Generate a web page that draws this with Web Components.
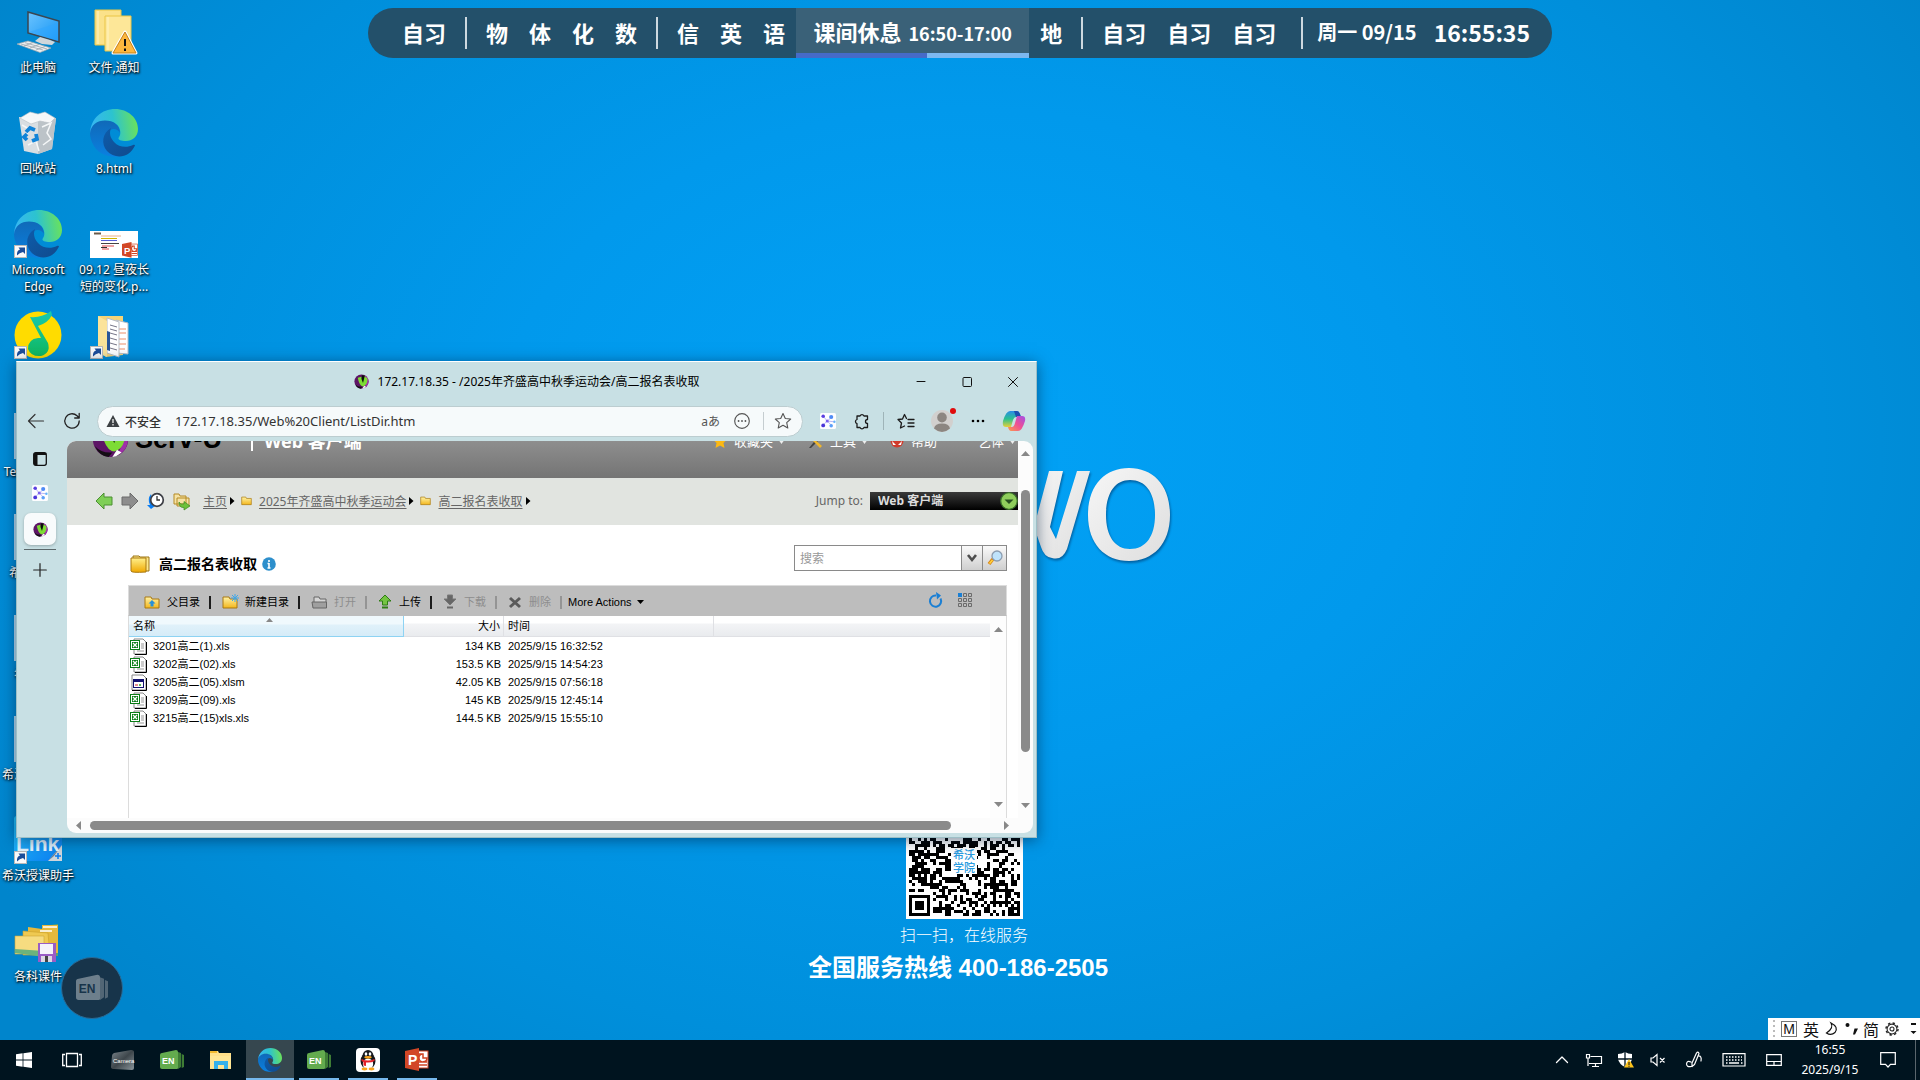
<!DOCTYPE html>
<html lang="zh-CN">
<head>
<meta charset="utf-8">
<title>桌面</title>
<style>
  html, body { margin: 0; height: 100%; overflow: hidden; }
  body {
    font-family: "Noto Sans", "Noto Sans CJK SC", sans-serif;
    font-size: 12px;
    --glass: #c8e0e4;
  }
</style>
</head>
<body>
<desktop-shell></desktop-shell>

<script>
/* ---------- shared helpers ---------- */
const RESET = `
  *, *::before, *::after { box-sizing: border-box; }
  button, input, select { font: inherit; color: inherit; margin: 0; padding: 0; border: 0; background: none; border-radius: 0; outline: 0; }
  button { display: inline-flex; align-items: center; justify-content: center; white-space: nowrap; }
  svg { display: block; }
`;
function define(name, css, html, setup) {
  const tpl = document.createElement('template');
  tpl.innerHTML = `<style>${RESET}${css}</style>${html}`;
  customElements.define(name, class extends HTMLElement {
    constructor() {
      super();
      this.attachShadow({ mode: 'open' }).append(tpl.content.cloneNode(true));
    }
    connectedCallback() { if (setup) setup.call(this, this.shadowRoot); }
  });
}

/* ---------- icon set: name -> [viewBox w, h, markup] ---------- */
const line = (d, c = '#1b1b1b', w = 1.3) => `<path d="${d}" fill="none" stroke="${c}" stroke-width="${w}" stroke-linecap="round" stroke-linejoin="round"/>`;
const EDGE = `
  <defs>
    <linearGradient id="et" x1="0" y1=".6" x2="1" y2=".5"><stop offset="0" stop-color="#38b6f5"/><stop offset=".5" stop-color="#2cc3cf"/><stop offset="1" stop-color="#6be25a"/></linearGradient>
    <linearGradient id="eb" x1="0" y1="0" x2="0" y2="1"><stop offset="0" stop-color="#1069b8"/><stop offset="1" stop-color="#0a80e0"/></linearGradient>
    <linearGradient id="ed" x1="0" y1="0" x2="1" y2="1"><stop offset="0" stop-color="#0d5cab"/><stop offset="1" stop-color="#114a8c"/></linearGradient>
  </defs>
  <path fill="url(#eb)" d="M0 24C0 15 8 11 15 11C24 11 30 17 30 24C27 19 20 18 18 25C13 34 18 47 31 47C22 49 10 47 4 37C1 32 0 28 0 24Z"/>
  <path fill="url(#et)" d="M0 24C1 9 12 0 25 0C38 0 48 9 48 20C48 28 42 32 36 32C31 32 28 31 28.500 29C29.500 27.500 30.500 26 30.300 23C30 16 24 11.500 15 11.500C7 11.500 1 16 0 24Z"/>
  <path fill="url(#ed)" d="M21 19C12 24 11 35 17 42C22 48 32 49 38 45C41 43 44 39 45 36.500C45 35.500 44 35.500 43 36C37 39 29 38.500 24 33C20 28.500 19 24 21 19Z"/>`;
const SERVU = `
  <circle cx="20" cy="20" r="19" fill="#5d1566"/>
  <path d="M26 2A19 19 0 0 1 37 28Q34 34 27 37Q38 20 26 2Z" fill="#a030a8"/>
  <path d="M10 10L20 7L22 18L26 4L36 12Q36 30 24 33Q14 32 10 10Z" fill="#7ddc34"/>
  <path d="M21 3L29 4L24 24L20 13Z" fill="#0c0c0c"/>
  <path d="M3 27Q10 35 22 34L18 39Q8 38 3 27Z" fill="#140d14"/>
  <path d="M22 39L27 31L32 34L26 38Z" fill="#fff"/>`;
const NET = `
  <rect width="20" height="20" rx="2" fill="#fdfdff"/>
  <path d="M4 4L9 10L15 5M9 10L4 15M9 10L15 16M9 10L18 11" stroke="#a9a4f4" fill="none"/>
  <circle cx="4" cy="4" r="2.200" fill="#5a3fe0"/><circle cx="9" cy="10" r="1.900" fill="#7a62ee"/>
  <circle cx="14" cy="5" r="2.600" fill="#4f8bf5"/><circle cx="4" cy="15.500" r="2.400" fill="#4a35d8"/>
  <circle cx="14" cy="16" r="2.200" fill="#5aa0f8"/><circle cx="18" cy="11" r="1.500" fill="#62b4fa"/>`;
const FOLDER = `
  <defs><linearGradient id="fg" x1="0" y1="0" x2="0" y2="1"><stop offset="0" stop-color="#fff3a6"/><stop offset="1" stop-color="#f3b61c"/></linearGradient></defs>
  <path d="M1 3H7L8 5H15V14H1Z" fill="url(#fg)" stroke="#a97912"/>`;
const SHORTCUT = `<rect x=".5" y="35.500" width="12" height="12" fill="#fbfbfb" stroke="#b9b9b9"/><path d="M3 45.500Q2.500 40.500 6 39.500L4.500 37.500H11V44L9 42Q5.500 42.500 3 45.500Z" fill="#1c4e9b"/>`;
const ENCARD = (c, d) => `
  <path d="M18 4L21 5V19L18 21ZM21.700 6L24 7V19L21.700 20Z" fill="${d}"/>
  <path d="M0 7Q0 5 2 5L16 2Q18 2 18 4V20Q18 21 17 21H2Q0 21 0 19Z" fill="${c}"/>`;
const P_ICON = `
  <rect x="12" y="3" width="11" height="17" fill="#fff" stroke="#d04423"/>
  <path d="M14 6H18V10H22A4 4 0 1 1 17 6M14 14H22M14 17H22" fill="none" stroke="#d04423" stroke-width="1.500"/>
  <path d="M0 3L14 0V23L0 20Z" fill="#d24726"/>
  <text x="3" y="17" font-family="Liberation Sans" font-weight="700" font-size="14" fill="#fff">P</text>`;
const XLS = `
  <path d="M4 1H13L16 4V16H4Z" fill="#fff" stroke="#888"/><path d="M5 16.500H16.500V4" fill="none" stroke="#000"/>
  <path d="M11 6H14M11 8H14M11 10H14M7 13H14" stroke="#999"/>
  <rect x=".5" y="2.500" width="9" height="9" fill="#fff" stroke="#0a7d16"/><rect x="2" y="4" width="6" height="6" fill="#0a7d16"/>
  <path d="M3 5L7 9M7 5L3 9" stroke="#fff" stroke-width="1.300"/>`;

const ICONS = {
  edge: [48, 48, EDGE],
  edgesm: [24, 24, `<g transform="scale(.5)">${EDGE}</g>`],
  edgelink: [48, 48, EDGE + SHORTCUT],
  servu: [40, 40, SERVU],
  net: [20, 20, NET],
  pc: [48, 48, `
    <defs><linearGradient id="scr" x1="0" y1="0" x2="1" y2="1"><stop offset="0" stop-color="#6cc4ff"/><stop offset="1" stop-color="#1294f4"/></linearGradient></defs>
    <path d="M14 4L45 13V34L14 25Z" fill="url(#scr)" stroke="#3b4650" stroke-width="1.500"/>
    <path d="M15 24L44 15V33Z" fill="#2ea6ff" opacity=".5"/>
    <path d="M26 29L36 32L41 34L38 37L28 36L21 33Z" fill="#cfd6da"/>
    <path d="M3 36L14 33L37 40L26 44.500Z" fill="#eceff1" stroke="#9ea7ad" stroke-width=".7"/>
    <path d="M7 36L29 42M11 34.700L33 41M10 38L19 34.500M16 40L25 36.500M22 42L31 38.500" stroke="#9ea7ad" stroke-width=".8"/>`],
  bin: [48, 48, `
    <path d="M5 8L42 9L38 40L24 45L10 42Z" fill="#d9dee2"/><path d="M24 12L42 9L38 40L24 45Z" fill="#bcc3c8"/>
    <path d="M6 9L16 3L24 5L31 3L41 9L36 14L26 12L17 15Z" fill="#f7f8f9" stroke="#b9c0c5" stroke-width=".6"/>
    <path d="M12 8L19 6L22 11M27 6L33 8L30 12M8 16L15 20L12 28M28 18L37 14L33 24L37 30L29 36M14 36L22 32L25 42" stroke="#f5f7f8" fill="none" stroke-width="1.500"/>
    <path d="M12 23L16 19L21 21M22 25L23 30L18 32M13 31L10 28L13 25" fill="none" stroke="#0f83d8" stroke-width="3.800"/>`],
  folderwarn: [48, 48, `
    <path d="M5 2H31V37H5Z" fill="#fbe28a" stroke="#eac646"/><path d="M15 8H41V43H15Z" fill="#fde798" stroke="#eac646"/>
    <path d="M8 3V36M18 9V42" stroke="#fff4c4"/>
    <path d="M35 24L46 45H23Z" fill="#fdb73e" stroke="#fff" stroke-width="3" stroke-linejoin="round"/><path d="M35 24L46 45H23Z" fill="#fdb73e" stroke="#c3821b" stroke-linejoin="round"/>
    <path d="M35 31V38M35 40.500V43" stroke="#111" stroke-width="2"/>`],
  slide: [48, 48, `
    <rect y="21" width="48" height="27" fill="#fff"/>
    <path d="M4 23.500H11" stroke="#6b5b4a" stroke-width="2"/><path d="M11 26H31" stroke="#eab08a"/><path d="M11 28.500H27" stroke="#d0b400"/>
    <path d="M11 30.500H27" stroke="#5560d8"/><path d="M11 33.500H29" stroke="#444"/><path d="M12 36H24M12 39H19" stroke="#d44"/><path d="M11 37.500H17" stroke="#333"/>
    <g transform="translate(32 32) scale(.68)">${P_ICON}</g>`],
  music: [48, 48, `
    <defs><linearGradient id="mg" x1="0" y1="0" x2="0" y2="1"><stop offset="0" stop-color="#16c9b0"/><stop offset="1" stop-color="#12b85f"/></linearGradient></defs>
    <circle cx="24" cy="24" r="23.500" fill="#ffdc00"/>
    <path d="M16 6Q28 7 37 0L38 4Q34 12 24 15L34 32Q37 42 27 45Q17 46 14 38Q14 28 24 27L27 27Z" fill="url(#mg)"/>` + SHORTCUT],
  docs: [48, 48, `
    <path d="M8 5H33V44L16 46L8 40Z" fill="#f6d477"/>
    <path d="M26 9L38 12V43L26 42Z" fill="#fff" stroke="#b8bec6"/><path d="M28 18H36M28 22H36M29 28H36M29 33H36M29 38H35" stroke="#eb8f6b"/>
    <path d="M17 7L29 11V46L17 42Z" fill="#fff" stroke="#b8bec6"/><path d="M20 14L27 16M20 18L27 20M20 22L27 24M20 27L27 29M20 32L27 34M20 37L27 39" stroke="#778"/>
    <path d="M17 20L20 21V40L17 39Z" fill="#2a5699"/><path d="M8 5L17 10V46L8 42Z" fill="#fbe39a"/>` + SHORTCUT],
  sliver: [48, 48, `<rect x="0" y="1" width="46" height="46" fill="#b8dcf0"/>`],
  link: [48, 48, `
    <defs><linearGradient id="lk" x1="0" y1="0" x2="1" y2="1"><stop offset="0" stop-color="#25c4fa"/><stop offset="1" stop-color="#0a7cf0"/></linearGradient></defs>
    <rect width="48" height="45" rx="3" fill="url(#lk)"/><path d="M48 29L34 45H48Z" fill="#cfd6dc"/><path d="M48 29L40 40L34 45Q40 38 48 29Z" fill="#6d7f90"/><path d="M41 40H47M44 37V43" stroke="#0a7cf0" stroke-width="1.500"/>
    <text x="2" y="35" font-family="Liberation Sans" font-weight="700" font-size="21" fill="#e4f5ff">Link</text>` + SHORTCUT],
  folders: [48, 48, `
    <path d="M30 9L44 7V39H40ZM20 13H40V38H20Z" fill="#5da36b"/>
    <path d="M14 10L28 12V8L44 8V36H14Z" fill="#e5b93c"/><path d="M9 14L34 16L36 38H9Z" fill="#efc951" stroke="#caa02a" stroke-width=".6"/><path d="M29 10H43M26 14H38" stroke="#fff" stroke-width="1.500"/>
    <path d="M1 19H30V37H1Z" fill="#f6dc80" stroke="#cca638" stroke-width=".6"/><path d="M1 32L30 34V40L1 36Z" fill="#6db37c"/>
    <rect x="24" y="26" width="18" height="19" fill="#9a5cc6"/><rect x="26" y="27" width="13" height="10" fill="#f5f2fa"/><rect x="27" y="39" width="11" height="6" fill="#dcd8e4"/><rect x="31" y="39" width="3" height="6" fill="#444"/>`],
  win: [16, 16, `<path d="M0 2.200L6.600 1.300V7.600H0ZM7.400 1.200L16 0V7.600H7.400ZM0 8.400H6.600V14.700L0 13.800ZM7.400 8.400H16V16L7.400 14.800Z" fill="#fff"/>`],
  taskview: [20, 16, `<path d="M4.500 1.500H15.500V14.500H4.500ZM3 2.500H.7V13.500H3M17 2.500H19.300V13.500H17" fill="none" stroke="#fff" stroke-width="1.300"/>`],
  camera: [24, 24, `
    <defs><linearGradient id="cg" x1="0" y1="0" x2="1" y2="1"><stop offset="0" stop-color="#7c868c"/><stop offset=".5" stop-color="#3d464b"/><stop offset="1" stop-color="#8b959b"/></linearGradient></defs>
    <path d="M1 8Q1 6 3 5L20 2Q23 2 23 4V20Q23 22 21 22L3 21Q0 21 0 19Z" fill="url(#cg)"/>
    <text x="2" y="15" font-family="Liberation Sans" font-size="6" fill="#fff">Camera</text>`],
  encard: [24, 24, ENCARD('#63ab4e', '#3e7d35') + `<text x="2" y="16" font-family="Liberation Sans" font-weight="700" font-size="9" fill="#fff">EN</text>`],
  encardgrey: [24, 24, ENCARD('#6d7f8c', '#526675') + `<text x="2" y="16" font-family="Liberation Sans" font-weight="700" font-size="9" fill="#17344a">EN</text>`],
  explorer: [24, 24, `<path d="M1 3H9L10 5H22V21H1Z" fill="#ffe08a"/><path d="M1 3H8V5H1Z" fill="#f2b92f"/><path d="M1 8H22V20H1Z" fill="#ffe695"/><path d="M5 21V13H19V21H15V17H9V21Z" fill="#35b1ea"/>`],
  qq: [24, 24, `<rect width="24" height="24" rx="4" fill="#fff"/>
    <ellipse cx="12" cy="13" rx="7.500" ry="8" fill="#15181c"/><ellipse cx="12" cy="8" rx="5.500" ry="6" fill="#15181c"/><ellipse cx="12" cy="16" rx="5.200" ry="5.500" fill="#fff"/>
    <ellipse cx="10" cy="6" rx="1.300" ry="1.700" fill="#fff"/><ellipse cx="14" cy="6" rx="1.300" ry="1.700" fill="#fff"/><ellipse cx="12" cy="9.300" rx="3.700" ry="1.200" fill="#fba51c"/>
    <path d="M5.500 11Q12 14 18.500 11V13Q15 15 10 14.500V18L7.500 17.500V14L5.500 13Z" fill="#e32028"/><ellipse cx="8.500" cy="21" rx="3" ry="1.400" fill="#fba51c"/><ellipse cx="15.500" cy="21" rx="3" ry="1.400" fill="#fba51c"/>`],
  ppt: [24, 24, P_ICON],
  /* tray */
  chevup: [16, 16, line('M2.500 10.500L8 5L13.500 10.500', '#fff', 1.300)],
  netmon: [18, 16, `<path d="M5.500 4.500H16.500V11.500H4M10.500 12V14.500M7 14.500H14M1.500 2.500H4.500V6H1.500ZM3 6V14" fill="none" stroke="#fff" stroke-width="1.200"/>`],
  shield: [18, 16, `<path d="M8 0Q11 2 15 2V7Q14 12 8 15Q2 12 1 7V2Q5 2 8 0Z" fill="#fff"/><path d="M8 0V15M1 7H15" stroke="#00141f" stroke-width="1.300"/><path d="M12 7L17 15.500H7Z" fill="#fcc21b"/><path d="M12 10V13M12 13.700V14.800" stroke="#111"/>`],
  mute: [18, 16, `<path d="M2 6H4L8 2.500V13.500L4 10H2ZM11 6L15.500 10.500M15.500 6L11 10.500" fill="none" stroke="#fff" stroke-width="1.200"/>`],
  pen: [18, 18, line('M11.500 2Q13 0 14 2.500L9.500 13.500L7 15.500L7 12ZM6 11Q2 9 1.500 13Q2 16.500 6 15.500M13 5Q17 4.500 16 10', '#fff', 1.200)],
  kbd: [24, 14, `<path d="M1 .7H23V13H1Z" fill="none" stroke="#fff" stroke-width="1.200"/><path d="M4 4H20M4 7H20" stroke="#fff" stroke-width="1.300" stroke-dasharray="1.500 1.500"/><path d="M4 10H5.500M7 10H17M19 10H20.500" stroke="#fff" stroke-width="1.300"/>`],
  pad: [16, 12, `<path d="M.7 .7H15.300V11.300H.7ZM.7 7.500H15.300M8 7.500V11" fill="none" stroke="#fff" stroke-width="1.200"/>`],
  notif: [16, 16, `<path d="M.7 .7H15.300V12.300H10.500L8 15L5.500 12.300H.7Z" fill="none" stroke="#fff" stroke-width="1.200"/>`],
  moon: [14, 14, `<path d="M6 1Q9 6 1.500 11Q6 14 10 10.500Q14 5 6 1Z" fill="none" stroke="#111" stroke-width="1.200"/>`],
  punct: [14, 14, `<circle cx="2.500" cy="3" r="2" fill="#111"/><path d="M9.500 6.500H13L10 12.500H8Z" fill="#111"/>`],
  gear: [16, 16, `<circle cx="8" cy="8" r="5.600" fill="none" stroke="#222" stroke-width="1.200"/><circle cx="8" cy="8" r="6.900" fill="none" stroke="#222" stroke-width="1.600" stroke-dasharray="2.700 2.700"/><circle cx="8" cy="8" r="2.300" fill="none" stroke="#222" stroke-width="1.200"/>`],
  imemenu: [8, 12, `<path d="M2 1H7" stroke="#111" stroke-width="2"/><path d="M1.500 8H7.500L4.500 11Z" fill="#111"/>`],
  /* browser chrome */
  min: [10, 10, line('M1 4.500H9', '#111', 1)],
  max: [10, 10, `<rect x="1" y=".5" width="8.500" height="9" rx="1" fill="none" stroke="#111"/>`],
  close: [10, 10, line('M.5 .5L9.500 9.500M9.500 .5L.5 9.500', '#111', 1)],
  back: [18, 16, line('M16.500 8H1.500M8 1.500L1.500 8L8 14.500', '#333', 1.200)],
  reload: [18, 18, line('M16.200 9A7.200 7.200 0 1 1 14 3.800L16 5.800M16.200 1.500V6H11.700', '#222', 1.300)],
  warn: [14, 12, `<path d="M7 0L13.500 12H.5Z" fill="#3c4043"/><path d="M7 4V8M7 9V10.500" stroke="#fff" stroke-width="1.200"/>`],
  dots3: [14, 14, `<circle cx="7" cy="7" r="6.400" fill="none" stroke="#555"/><circle cx="4" cy="7" r=".8" fill="#555"/><circle cx="7" cy="7" r=".8" fill="#555"/><circle cx="10" cy="7" r=".8" fill="#555"/>`],
  star: [18, 18, line('M9 1.500L11.300 6.500L16.700 7L12.700 10.700L13.800 16L9 13.300L4.200 16L5.300 10.700L1.300 7L6.700 6.500Z', '#555', 1.100)],
  puzzle: [18, 18, line('M4 4H7A2.200 2.200 0 0 1 11 4H14.500V7.500A2 2 0 0 0 14.500 11.500V15.500H11A2.200 2.200 0 0 1 7 15.500H4V11.700A2.200 2.200 0 0 1 4 7.500Z', '#1b1b1b', 1.300)],
  favs: [18, 18, line('M7.500 14L3.500 16L4.500 11L1 7.500L5.500 7L7.500 2.500L9.500 6.500M11 7.500H17M11 11H17M11 14.500H17', '#1b1b1b', 1.300)],
  avatar: [22, 22, `<circle cx="11" cy="11" r="11" fill="#d2d0ce"/><ellipse cx="11" cy="7.500" rx="4.800" ry="5" fill="#8c8681"/><path d="M3 18.500Q4 13.500 11 13.500Q18 13.500 19 18.500Q15 22 11 22Q7 22 3 18.500Z" fill="#8c8681"/>`],
  more: [14, 4, `<circle cx="2" cy="2" r="1.300"/><circle cx="7" cy="2" r="1.300"/><circle cx="12" cy="2" r="1.300"/>`],
  copilot: [24, 22, `
    <defs><linearGradient id="c1" x1="0" y1="0" x2="0" y2="1"><stop offset="0" stop-color="#2a8de8"/><stop offset=".5" stop-color="#2cc18e"/><stop offset="1" stop-color="#e8cf3a"/></linearGradient>
    <linearGradient id="c2" x1="1" y1="0" x2="0" y2="1"><stop offset="0" stop-color="#a04fe8"/><stop offset=".5" stop-color="#ef4f94"/><stop offset="1" stop-color="#fb9c4a"/></linearGradient></defs>
    <path d="M8 1H15Q17 1 18 4L19 7H14Q12 7 11 10L9 17H4Q0 17 1 11Q4 1 8 1Z" fill="url(#c1)"/><path d="M12 1H15Q17 1 18 4L19 7H14Z" fill="#1b4fb0"/>
    <path d="M16 21H9Q7 21 6 17H10Q12 17 13 13L15 6H20Q24 6 23 11Q20 21 16 21Z" fill="url(#c2)"/>`],
  tabs: [14, 14, `<rect x=".7" y=".7" width="12.600" height="12.600" rx="2" fill="none" stroke="#111" stroke-width="1.300"/><path d="M1 1H4.500V13H1ZM1 1H13V3H1Z" fill="#111"/>`],
  plus: [14, 14, line('M7 .7V13.300M.7 7H13.300', '#222', 1.200)],
  /* serv-u page */
  goldstar: [14, 14, `<path d="M7 0L9 5L14 5.500L10.500 9L11.500 14L7 11.500L2.500 14L3.500 9L0 5.500L5 5Z" fill="#fdb913"/>`],
  tools: [16, 16, `<path d="M2 15L11 4L13 6L4 15Z" fill="#444"/><path d="M6 5L15 13L13 15L5 7Z" fill="#f0b62c"/><path d="M9 1H15L13 5H9Z" fill="#555"/>`],
  helpball: [14, 14, `<circle cx="7" cy="7" r="6.500" fill="#d03a2b"/><path d="M2 7L6 11H3ZM12 7L8 11H11Z" fill="#fff"/>`],
  navback: [18, 18, `<path d="M1 9L9 1V5H17V13H9V17Z" fill="#7fcf57" stroke="#4c8f33"/>`],
  navfwd: [18, 18, `<path d="M17 9L9 1V5H1V13H9V17Z" fill="#8d8d8d" stroke="#6b6b6b"/>`],
  history: [18, 18, `<path d="M4 2Q0 7 3 13L0 13L4 17L8 14L6 11Z" fill="#0a7df2"/><circle cx="10" cy="8" r="6.300" fill="#fff" stroke="#3d3f46" stroke-width="1.700"/><path d="M10 4V8H13" fill="none" stroke="#333" stroke-width="1.300"/>`],
  foldergo: [18, 18, `<path d="M1 2H6L7 4H13V12H1ZM4 6H16V14H4Z" fill="#f5e2a4" stroke="#b58a25"/><path d="M6 10Q7 13 11 12V9.500L17 14L11 18V15.500Q6 16 6 10Z" fill="#6cc13a" stroke="#3b8a1d" stroke-width=".7"/>`],
  folder: [16, 16, FOLDER],
  bigfolder: [20, 20, `<defs><linearGradient id="bf" x1="0" y1="0" x2="0" y2="1"><stop offset="0" stop-color="#fff08c"/><stop offset="1" stop-color="#f0a800"/></linearGradient></defs><path d="M3 4V2H9L10 3H19V17H16" fill="#ffe88a" stroke="#9b7414"/><path d="M1 4H16V18Q1 19 1 17Z" fill="url(#bf)" stroke="#a97912"/>`],
  info: [14, 14, `<circle cx="7" cy="7" r="6.800" fill="#2d8fcc"/><path d="M7 3V5M7 6V11M5.500 6.500H7M5.500 11H8.500" stroke="#fff" stroke-width="1.600"/>`],
  folderup: [16, 16, FOLDER + `<path d="M8 6L11.500 9.500H9.500V12.500H6.500V9.500H4.500Z" fill="#2590d8"/>`],
  foldernew: [16, 16, FOLDER + `<path d="M13 0V8M9 4H17M10 1L16 7M16 1L10 7" stroke="#3fa6e8"/>`],
  folderopen: [16, 16, `<path d="M3 8V3H8L9 5H15V8" fill="#d5d5d5" stroke="#666"/><path d="M1 8H15.500V14H2Z" fill="#9f9f9f" stroke="#666"/>`],
  up: [14, 16, `<path d="M7 1L13 7H9.500V11H4.500V7H1Z" fill="#74c442" stroke="#2f7d14"/><path d="M4 13.500H10" stroke="#2f7d14" stroke-width="2"/>`],
  down: [14, 16, `<path d="M7 11L13 5H9.500V1H4.500V5H1Z" fill="#666" stroke="#777"/><path d="M4 13.500H10" stroke="#666" stroke-width="2"/>`],
  cross: [14, 13, `<path d="M2 2L12 11M12 2L2 11" stroke="#5a5a5a" stroke-width="3"/>`],
  refresh: [14, 16, `<path d="M11.500 6.500A5.600 5.600 0 1 1 7 3.500" fill="none" stroke="#1a7fd4" stroke-width="2"/><path d="M7 0L12 3.500L8 7.500Z" fill="#1a7fd4"/>`],
  grid: [15, 15, `<rect width="4" height="4" fill="#1a7fd4"/><path d="M5.500 .5H8.500V3.500H5.500ZM10.500 .5H13.500V3.500H10.500ZM.5 5.500H3.500V8.500H.5ZM5.500 5.500H8.500V8.500H5.500ZM10.500 5.500H13.500V8.500H10.500ZM.5 10.500H3.500V13.500H.5ZM5.500 10.500H8.500V13.500H5.500ZM10.500 10.500H13.500V13.500H10.500Z" fill="none" stroke="#6b6b6b"/>`],
  vee: [10, 8, `<path d="M1 1L5 6L9 1" fill="none" stroke="#4e4e4e" stroke-width="2.600"/>`],
  glass: [16, 16, `<path d="M6 9L2 14" stroke="#d98512" stroke-width="3.500"/><path d="M5.500 10L2.500 13.500" stroke="#ffd23c" stroke-width="1.600"/><circle cx="10" cy="6" r="5" fill="#bfe3fb" stroke="#8c9db0" stroke-width="1.300"/>`],
  jump: [18, 18, `<circle cx="9" cy="9" r="8.300" fill="#8fce5c" stroke="#39702a" stroke-width="1.300"/><path d="M4.500 7.500H13.500L9 12Z" fill="#275020"/>`],
  xls: [17, 17, XLS],
  xlsm: [17, 17, `<path d="M2 1H13L16 4V16H2Z" fill="#fff" stroke="#888"/><path d="M2 16.500H16.500V4" fill="none" stroke="#000"/><rect x="3.500" y="5.500" width="10" height="8" fill="#fff" stroke="#12126e"/><path d="M3 6.500H14" stroke="#12126e" stroke-width="3"/><path d="M6 10V12M7.500 10.500V11.500" stroke="#c22"/><path d="M10 10V12" stroke="#2a2" stroke-width="1.500"/>`],
  triU: [9, 5, `<path d="M0 5L4.500 0L9 5Z" fill="#888"/>`],
  triD: [9, 5, `<path d="M0 0L4.500 5L9 0Z" fill="#888"/>`],
  triDk: [7, 4, `<path d="M0 0L3.500 4L7 0Z" fill="#000"/>`],
  triW: [7, 5, `<path d="M0 0L3.500 5L7 0Z" fill="#eee"/>`],
  triL: [5, 9, `<path d="M5 0L0 4.500L5 9Z" fill="#888"/>`],
  triR: [5, 9, `<path d="M0 0L5 4.500L0 9Z" fill="#888"/>`],
  triK: [5, 8, `<path d="M0 0L4.500 4L0 8Z" fill="#000"/>`],
};
customElements.define('ui-icon', class extends HTMLElement {
  static observedAttributes = ['name', 'size'];
  constructor() {
    super();
    this.attachShadow({ mode: 'open' }).innerHTML =
      '<style>:host { display: inline-block; flex: none; line-height: 0; } svg { display: block; overflow: visible; }</style><span></span>';
  }
  attributeChangedCallback() {
    const icon = ICONS[this.getAttribute('name')];
    if (!icon) return;
    const [w, h, body] = icon;
    const width = Number(this.getAttribute('size')) || w;
    this.shadowRoot.querySelector('span').innerHTML =
      `<svg width="${width}" height="${Math.round(width * h / w)}" viewBox="0 0 ${w} ${h}" aria-hidden="true">${body}</svg>`;
  }
});

/* ---------- desktop icons ---------- */
define('desktop-icon', `
  :host { display: flex; flex-direction: column; align-items: center; width: 76px; height: 101px; color: #fff; }
  span { display: block; margin-top: 3px; width: 76px; font-size: 12px; line-height: 17px; text-align: center;
         text-shadow: 1px 1px 2px #000, 0 1px 3px rgba(0,0,0,.8); }
`, `<ui-icon size="48"></ui-icon><span><slot></slot></span>`, function (root) {
  root.querySelector('ui-icon').setAttribute('name', this.getAttribute('icon'));
});

/* ---------- timetable strip ---------- */
define('lesson-item', `
  :host { display: flex; align-items: center; padding: 0 10px 3px; font-size: 22px; }
`, `<slot></slot>`);
define('lesson-now', `
  :host { display: grid; grid-template-rows: 45px 5px; width: 233px; align-self: stretch; background: #3a6178; }
  div { display: flex; align-items: baseline; justify-content: center; gap: 7px; font-size: 22px; line-height: 46px; }
  small { font-size: 18px; }
  progress { appearance: none; width: 100%; height: 5px; border: 0; display: block; background: #7db8f0; }
  progress::-webkit-progress-bar { background: #7db8f0; }
  progress::-webkit-progress-value { background: #466bc8; }
`, `<div><slot></slot><small><slot name="range"></slot></small></div><progress max="100" value="56" aria-label="课间进度"></progress>`);
define('lesson-bar', `
  :host { display: flex; align-items: center; gap: 1px; width: 1184px; height: 50px; padding: 0 22px 0 24px; overflow: hidden;
    border-radius: 25px; background: #23506a; color: #fff; font-family: "Noto Sans CJK SC", sans-serif; font-weight: 700; white-space: nowrap; line-height: 40px; }
  i { width: 2px; height: 32px; margin: 0 8px; background: #cdd9e0; }
  i.last { margin-left: 14px; }
  .date { padding: 0 0 3px 5px; font-size: 20px; }
  .time { padding-bottom: 3px; margin-left: auto; font-size: 23px; }
`, `
  <lesson-item>自习</lesson-item><i></i>
  <lesson-item>物</lesson-item><lesson-item>体</lesson-item><lesson-item>化</lesson-item><lesson-item>数</lesson-item><i></i>
  <lesson-item>信</lesson-item><lesson-item>英</lesson-item><lesson-item>语</lesson-item>
  <lesson-now>课间休息<span slot="range">16:50-17:00</span></lesson-now>
  <lesson-item>地</lesson-item><i></i>
  <lesson-item>自习</lesson-item><lesson-item>自习</lesson-item><lesson-item>自习</lesson-item><i class="last"></i>
  <span class="date">周一 09/15</span><span class="time">16:55:35</span>
`);

/* ---------- wallpaper logo, QR code and hotline ---------- */
define('brand-logo', `:host { display: block; } svg { overflow: visible; filter: drop-shadow(1px 2px 1px rgba(0,50,100,.55)); }`, `
  <svg width="160" height="96" viewBox="0 0 160 96" role="img" aria-label="seewo">
    <defs><linearGradient id="lg" x1="0" y1="0" x2="1" y2="1"><stop offset="0" stop-color="#f6f6f6"/><stop offset="1" stop-color="#dedede"/></linearGradient></defs>
    <path d="M39 4H53L40 60L46 72L67 4H80L57 82Q52 94 42 91Q34 90 31 80L24 60Z" fill="url(#lg)"/>
    <path fill="url(#lg)" fill-rule="evenodd" d="M119 1C143 1 160 18 160 48C160 77 143 94 119 94C95 94 78 77 78 48C78 18 95 1 119 1ZM120 13C105 13 96 26 96 48C96 69 105 82 120 82C136 82 145 69 145 48C145 26 136 13 120 13Z"/>
  </svg>`);
define('qr-code', `
  :host { display: grid; width: 117px; height: 117px; padding: 3px; background: #fff; }
  svg, p { grid-area: 1 / 1; }
  p { place-self: center; margin: 0; padding: 0 2px; background: #fff; color: #2a9be0; font: 500 11px/13px "Noto Sans CJK SC", sans-serif; text-align: center; }
`, `<svg width="111" height="111" viewBox="0 0 37 37" shape-rendering="crispEdges" role="img" aria-label="二维码"><path/></svg><p>希沃<br>学院</p>`, function (root) {
  let seed = 20250915, d = '';
  const rnd = () => (seed = (seed * 1103515245 + 12345) % 2147483648) / 2147483648;
  const ring = (x, y, cx, cy) => Math.max(Math.abs(x - cx), Math.abs(y - cy));
  for (let y = 0; y < 37; y++) for (let x = 0; x < 37; x++) {
    let on = rnd() > .5;
    for (const [cx, cy] of [[3, 3], [33, 3], [3, 33]]) {
      const r = ring(x, y, cx, cy);
      if (r <= 4) on = r <= 1 || r === 3;
    }
    const a = ring(x, y, 30, 30);
    if (a <= 2) on = a !== 1;
    if (on) d += `M${x} ${y}h1v1h-1z`;
  }
  root.querySelector('path').setAttribute('d', d);
});
define('hotline-card', `
  :host { display: flex; flex-direction: column; align-items: center; color: #fff; white-space: nowrap; }
  p { margin: 0; }
  .scan { margin-top: 3px; font: 300 16px/24px "Noto Sans CJK SC", sans-serif; }
  .call { margin-top: 6px; padding-right: 12px; font: 700 24px/32px "Liberation Sans", "Noto Sans CJK SC", sans-serif; }
`, `<qr-code></qr-code><p class="scan">扫一扫，在线服务</p><p class="call">全国服务热线 400-186-2505</p>`);

/* ---------- Serv-U web client ---------- */
define('tool-button', `
  :host { display: flex; align-items: center; font-size: 11px; color: #000; }
  :host([off]) { color: #8d8d8d; }
  button { gap: 7px; padding: 0 9px 0 11px; line-height: 16px; }
  i { width: 2px; height: 13px; background: currentColor; opacity: .85; }
`, `<button type="button"><ui-icon></ui-icon><slot></slot></button><i></i>`, function (root) {
  root.querySelector('ui-icon').setAttribute('name', this.getAttribute('icon'));
  root.querySelector('button').disabled = this.hasAttribute('off');
});
define('file-table', `
  :host { display: grid; grid-template-columns: 1fr 16px; flex: 1; min-height: 0; border: 1px solid #dcdcdc; border-width: 0 1px; font: 11px/18px "Liberation Sans", "Noto Sans CJK SC", sans-serif; color: #000; }
  table { width: 100%; table-layout: fixed; border-collapse: separate; border-spacing: 0; align-self: start; }
  col.n { width: 275px; } col.s { width: 100px; } col.t { width: 210px; }
  th { height: 21px; padding: 0 4px; font-weight: 400; text-align: left; background: linear-gradient(#fff 35%, #f3f4f6 40%, #e9ebee); border: 1px solid #dfe0e4; border-width: 0 1px 1px 0; line-height: 19px; }
  th.n { background: linear-gradient(#f0f9fd 40%, #e0f1fa 45%, #d6ecf8); border-color: #8ed3f3; padding-left: 4px; }
  th.n div { display: grid; grid-template-columns: 1fr 1fr; }
  th.n ui-icon { justify-self: start; margin-top: 1px; }
  th:last-child { border-right: 0; }
  td { height: 18px; padding: 0 4px; white-space: nowrap; }
  td:first-child span { display: flex; align-items: center; gap: 6px; }
  td:first-child { padding-left: 1px; }
  .r { text-align: right; padding-right: 3px; }
  .bar { display: flex; flex-direction: column; justify-content: space-between; align-items: center; padding: 11px 0; background: #fdfdfd; }
`, `
  <table>
    <colgroup><col class="n"><col class="s"><col class="t"><col></colgroup>
    <thead><tr><th class="n"><div><span>名称</span><ui-icon name="triU" size="7"></ui-icon></div></th><th class="r">大小</th><th>时间</th><th></th></tr></thead>
    <tbody></tbody>
  </table>
  <div class="bar"><ui-icon name="triU"></ui-icon><ui-icon name="triD"></ui-icon></div>
`, function (root) {
  root.querySelector('tbody').innerHTML = [
    ['xls', '3201高二(1).xls', '134 KB', '2025/9/15 16:32:52'],
    ['xls', '3202高二(02).xls', '153.5 KB', '2025/9/15 14:54:23'],
    ['xlsm', '3205高二(05).xlsm', '42.05 KB', '2025/9/15 07:56:18'],
    ['xls', '3209高二(09).xls', '145 KB', '2025/9/15 12:45:14'],
    ['xls', '3215高二(15)xls.xls', '144.5 KB', '2025/9/15 15:55:10'],
  ].map(([i, n, s, t]) => `<tr><td><span><ui-icon name="${i}"></ui-icon>${n}</span></td><td class="r">${s}</td><td>${t}</td><td></td></tr>`).join('');
});
define('servu-page', `
  :host { display: flex; flex-direction: column; min-width: 0; background: #fff; overflow: hidden; }
  header { display: flex; align-items: flex-end; height: 37px; background: linear-gradient(#8e8e8e, #747474); overflow: hidden; flex: none; }
  .head { display: flex; align-items: center; flex: 1; height: 74px; padding-left: 25px; color: #fff; white-space: nowrap; }
  .head > ui-icon { margin-bottom: 4px; }
  .name { margin-left: 6px; width: 116px; font: 700 27px/32px "Liberation Sans", sans-serif; color: #000; padding-bottom: 4px; }
  .head i { width: 2px; height: 20px; background: #fff; margin-right: 11px; }
  .web { font: 700 18px/24px "Noto Sans", "Noto Sans CJK SC", sans-serif; flex: 1; }
  nav.top { display: flex; align-items: center; font-size: 13px; line-height: 18px; }
  nav.top a { display: flex; align-items: center; gap: 5px; color: #fff; text-decoration: none; }
  nav.top a ui-icon:first-child { margin-right: 2px; }
  nav.top a + a { margin-left: 41px; }
  nav.top a.w { margin-left: 22px; }
  .crumbs { display: flex; align-items: center; height: 47px; padding: 0 0 2px 28px; background: #e1e4e0; color: #666; flex: none; }
  .crumbs button { width: 18px; flex: none; margin-right: 8px; }
  .crumbs button:nth-of-type(4) { margin-right: 12px; }
  .crumbs a { color: #666; margin-right: 3px; text-decoration: underline; text-underline-offset: 2px; white-space: nowrap; }
  .crumbs .f { margin: 0 7px 0 6px; }
  .crumbs label { margin-left: auto; margin-right: 7px; font-size: 12px; }
  .jump { display: grid; width: 148px; height: 18px; background: linear-gradient(#3a3a3a, #000); }
  .jump > * { grid-area: 1 / 1; }
  select { appearance: none; width: 100%; padding: 0 8px; color: #ddd; font-weight: 700; font-size: 12px; line-height: 18px; }
  option { color: #000; }
  .jump ui-icon { justify-self: end; }
  main { display: flex; flex-direction: column; flex: 1; min-height: 0; padding: 20px 11px 0 61px; }
  .title { display: flex; align-items: center; height: 26px; margin-bottom: 14px; padding-left: 2px; }
  .cap { display: flex; align-items: center; padding-top: 12px; }
  h1 { margin: 0 5px 0 9px; font-size: 14px; line-height: 20px; font-weight: 700; }
  form { display: flex; margin-left: auto; width: 213px; height: 26px; border: 1px solid #8a8a8a; }
  form input { flex: 1; min-width: 0; padding: 0 5px; font-size: 12px; }
  form input::placeholder { color: #999; }
  form button { width: 21px; border-left: 1px solid #8a8a8a; background: linear-gradient(#fafafa, #cfcfcf); }
  form button:last-child { width: 24px; }
  .tools { display: flex; align-items: center; height: 31px; padding: 3px 0 0 4px; background: #bdbdbd; border: 1px solid #dcdcdc; border-bottom-color: #bdbdbd; flex: none; }
  .tools .act { gap: 5px; padding: 0 6px; font: 11px/16px "Liberation Sans", sans-serif; }
  .end { display: flex; gap: 15px; margin-left: auto; padding: 0 33px 4px 0; }
`, `
  <header><div class="head"><ui-icon name="servu" size="37"></ui-icon><span class="name">Serv-U</span><i></i><span class="web">Web 客户端</span>
    <nav class="top"><a href="#"><ui-icon name="goldstar"></ui-icon>收藏夹<ui-icon name="triW"></ui-icon></a>
      <a href="#" class="w"><ui-icon name="tools"></ui-icon>工具<ui-icon name="triW"></ui-icon></a>
      <a href="#" class="w"><ui-icon name="helpball"></ui-icon>帮助</a><a href="#">艺体<ui-icon name="triW"></ui-icon></a></nav></div></header>
  <div class="crumbs">
    <button type="button" aria-label="后退"><ui-icon name="navback"></ui-icon></button><button type="button" aria-label="前进"><ui-icon name="navfwd"></ui-icon></button>
    <button type="button" aria-label="历史"><ui-icon name="history"></ui-icon></button><button type="button" aria-label="转到"><ui-icon name="foldergo"></ui-icon></button>
    <a href="#">主页</a><ui-icon name="triK"></ui-icon>
    <ui-icon class="f" name="folder" size="11"></ui-icon><a href="#">2025年齐盛高中秋季运动会</a><ui-icon name="triK"></ui-icon>
    <ui-icon class="f" name="folder" size="11"></ui-icon><a href="#">高二报名表收取</a><ui-icon name="triK"></ui-icon>
    <label for="jump">Jump to:</label>
    <div class="jump"><select id="jump"><option>Web 客户端</option></select><ui-icon name="jump"></ui-icon></div>
  </div>
  <main>
    <div class="title"><div class="cap"><ui-icon name="bigfolder"></ui-icon><h1>高二报名表收取</h1><ui-icon name="info"></ui-icon></div>
      <form><input type="text" placeholder="搜索" aria-label="搜索"><button type="button" aria-label="搜索选项"><ui-icon name="vee"></ui-icon></button><button type="button" aria-label="开始搜索"><ui-icon name="glass"></ui-icon></button></form></div>
    <div class="tools">
      <tool-button icon="folderup">父目录</tool-button><tool-button icon="foldernew">新建目录</tool-button><tool-button icon="folderopen" off>打开</tool-button>
      <tool-button icon="up">上传</tool-button><tool-button icon="down" off>下载</tool-button><tool-button icon="cross" off>删除</tool-button>
      <button class="act" type="button">More Actions<ui-icon name="triDk"></ui-icon></button>
      <div class="end"><button type="button" aria-label="刷新"><ui-icon name="refresh"></ui-icon></button><button type="button" aria-label="视图"><ui-icon name="grid"></ui-icon></button></div>
    </div>
    <file-table></file-table>
  </main>
`);

/* ---------- browser window ---------- */
define('address-bar', `
  :host { display: flex; align-items: center; flex: 1; min-width: 0; height: 31px; padding: 0 10px 0 8px; border: 1px solid #bccdd0; border-radius: 16px; background: #f6fafb; color: #333; }
  .safe { font-size: 12px; font-weight: 500; margin: 0 14px 0 5px; font-family: "Noto Sans CJK SC", sans-serif; }
  input { flex: 1; min-width: 0; font-size: 13px; line-height: 20px; }
  .aa { font-size: 12px; color: #555; margin-right: 14px; }
  i { width: 1px; height: 18px; margin: 0 10px 0 13px; background: #c5cdd0; }
`, `<ui-icon name="warn"></ui-icon><span class="safe">不安全</span><input type="text" value="172.17.18.35/Web%20Client/ListDir.htm" aria-label="地址">
    <button class="aa" type="button">aあ</button><button type="button" aria-label="更多"><ui-icon name="dots3" size="16"></ui-icon></button><i></i><button type="button" aria-label="收藏"><ui-icon name="star"></ui-icon></button>`);
define('browser-window', `
  :host { display: grid; grid-template-rows: 39px 40px 1fr; background: var(--glass); border: 1px solid #9dbfc6; border-top-color: #fff; box-shadow: 0 2px 14px rgba(0,30,60,.55); }
  .caption { display: grid; grid-template-columns: 138px 1fr 138px; align-items: center; }
  .caption h2 { grid-column: 2; justify-self: center; margin: 0; font-size: 12px; font-weight: 400; line-height: 18px; display: flex; align-items: center; gap: 9px; white-space: nowrap; }
  .wc { display: flex; grid-column: 3; } .wc button { width: 46px; height: 38px; }
  .bar { display: flex; align-items: center; padding: 0 4px 0 1px; }
  .bar > button { width: 36px; }
  .bar > address-bar { margin: 0 9px 0 7px; }
  .bar > .e { width: 32px; }
  .bar > i { width: 1px; height: 18px; background: #9fb4b8; margin: 0 4px 0 3px; }
  .av { position: relative; } .av b { position: absolute; right: 4px; top: -2px; width: 6px; height: 6px; border-radius: 50%; background: #e00b0b; }
  .body { display: grid; grid-template-columns: 50px 1fr 3px; grid-template-rows: 1fr 4px; min-height: 0; }
  aside { display: flex; flex-direction: column; align-items: center; padding: 1px 4px 0 0; }
  aside button { width: 32px; height: 34px; }
  aside .on { height: 32px; margin-top: 3px; border-radius: 7px; background: #f8fbfc; box-shadow: 0 1px 3px rgba(0,0,0,.25); }
  aside hr { width: 32px; height: 1px; border: 0; margin: 4px 0 3px; background: #5c686b; }
  .view { display: grid; grid-template-columns: 1fr 15px; grid-template-rows: 1fr 15px; min-height: 0; border-radius: 9px; overflow: hidden; background: #fcfcfc; }
  .v { display: flex; flex-direction: column; align-items: center; padding: 10px 0; }
  .v b { width: 9px; flex: 0 1 262px; margin: 34px 0 auto; border-radius: 5px; background: #8a8a8a; }
  .h { display: flex; align-items: center; padding: 0 9px; }
  .h b { height: 9px; flex: 0 1 861px; margin: 0 auto 0 9px; border-radius: 5px; background: #8a8a8a; }
`, `
  <div class="caption"><h2><ui-icon name="servu" size="15"></ui-icon><span>172.17.18.35 - /2025年齐盛高中秋季运动会/高二报名表收取</span></h2>
    <div class="wc"><button aria-label="最小化"><ui-icon name="min"></ui-icon></button><button aria-label="最大化"><ui-icon name="max"></ui-icon></button><button aria-label="关闭"><ui-icon name="close"></ui-icon></button></div></div>
  <div class="bar">
    <button aria-label="返回"><ui-icon name="back"></ui-icon></button><button aria-label="刷新"><ui-icon name="reload"></ui-icon></button>
    <address-bar></address-bar>
    <button class="e" aria-label="扩展"><ui-icon name="net" size="16"></ui-icon></button><button aria-label="插件"><ui-icon name="puzzle"></ui-icon></button><i></i>
    <button aria-label="收藏夹"><ui-icon name="favs"></ui-icon></button><button class="av" aria-label="个人资料"><ui-icon name="avatar"></ui-icon><b></b></button>
    <button aria-label="设置"><ui-icon name="more"></ui-icon></button><button aria-label="Copilot"><ui-icon name="copilot"></ui-icon></button>
  </div>
  <div class="body">
    <aside><button aria-label="标签页"><ui-icon name="tabs"></ui-icon></button><button aria-label="网络"><ui-icon name="net" size="16"></ui-icon></button>
      <button class="on" aria-label="Serv-U"><ui-icon name="servu" size="15"></ui-icon></button><hr><button aria-label="新标签页"><ui-icon name="plus"></ui-icon></button></aside>
    <div class="view"><slot></slot>
      <div class="v"><ui-icon name="triU"></ui-icon><b></b><ui-icon name="triD"></ui-icon></div>
      <div class="h"><ui-icon name="triL"></ui-icon><b></b><ui-icon name="triR"></ui-icon></div>
    </div>
  </div>
`);

/* ---------- taskbar ---------- */
define('task-app', `
  :host { display: block; width: 48px; }
  button { width: 48px; height: 40px; }
  :host([active]) { background: #36474f; }
  :host([open]) button { background: linear-gradient(#76b9ed, #76b9ed) center bottom / 40px 2px no-repeat; }
  :host([active]) button { background-size: 48px 2px; }
`, `<button type="button"><ui-icon></ui-icon></button>`, function (root) {
  root.querySelector('ui-icon').setAttribute('name', this.getAttribute('icon'));
  root.querySelector('button').setAttribute('aria-label', this.getAttribute('icon'));
});
define('ime-bar', `
  :host { display: flex; align-items: center; width: 152px; height: 22px; padding: 0 3px 0 5px; background: #fff; color: #111; font: 16px/20px "Noto Sans CJK SC", sans-serif; }
  .grip { width: 2px; height: 18px; margin-right: 6px; background: repeating-linear-gradient(#bbb 0 2px, #fff 2px 5px); flex: none; }
  button { margin-right: 6px; flex: none; }
  button.m { width: 16px; height: 16px; border: 1px solid #777; font: 14px/14px "Liberation Sans", sans-serif; }
  button.s { margin-right: 4px; } button:last-child { margin: 0 0 0 auto; }
`, `<span class="grip"></span><button class="m">M</button><button>英</button><button aria-label="半角"><ui-icon name="moon"></ui-icon></button><button class="s" aria-label="标点"><ui-icon name="punct"></ui-icon></button><button>简</button><button aria-label="设置"><ui-icon name="gear" size="14"></ui-icon></button><button aria-label="菜单"><ui-icon name="imemenu"></ui-icon></button>`);
define('task-bar', `
  :host { display: flex; height: 40px; background: #00141f; color: #fff; }
  .apps { display: flex; gap: 1px; margin-left: 3px; }
  .tray { display: flex; margin-left: auto; }
  .tray button { width: 32px; height: 40px; } .tray .w { width: 40px; }
  .tray .clock { width: 72px; flex-direction: column; font-size: 12px; line-height: 20px; }
  .tray .note { width: 44px; }
  .tray .peek { width: 5px; margin-left: 5px; border-left: 1px solid #5a666d; }
`, `
  <task-app icon="win"></task-app><task-app icon="taskview"></task-app>
  <div class="apps"><task-app icon="camera"></task-app><task-app icon="encard"></task-app><task-app icon="explorer"></task-app><task-app icon="edgesm" open active></task-app>
    <task-app icon="encard" open></task-app><task-app icon="qq" open></task-app><task-app icon="ppt" open></task-app></div>
  <div class="tray">
    <button aria-label="隐藏的图标"><ui-icon name="chevup"></ui-icon></button><button aria-label="网络"><ui-icon name="netmon"></ui-icon></button><button aria-label="安全"><ui-icon name="shield"></ui-icon></button><button aria-label="静音"><ui-icon name="mute"></ui-icon></button>
    <button class="w" aria-label="笔"><ui-icon name="pen"></ui-icon></button><button class="w" aria-label="键盘"><ui-icon name="kbd"></ui-icon></button><button class="w" aria-label="触摸板"><ui-icon name="pad"></ui-icon></button>
    <button class="clock"><span>16:55</span><span>2025/9/15</span></button><button class="note" aria-label="通知"><ui-icon name="notif"></ui-icon></button><button class="peek" aria-label="显示桌面"></button>
  </div>
`);

/* ---------- desktop ---------- */
define('desktop-shell', `
  :host { display: grid; grid-template-rows: 1fr 40px; height: 100vh; }
  .desk { position: relative; overflow: hidden; background: radial-gradient(ellipse 1150px 820px at 50% 42%, #02a2f6 0%, #0199ec 40%, #008fdb 75%, #0085cc 100%); }
  .icons { display: flex; align-items: flex-start; padding: 8px 0; }
  .col { display: grid; width: 76px; }
  lesson-bar { position: absolute; top: 8px; left: 50%; margin-left: -592px; box-sizing: border-box; }
  brand-logo { position: absolute; left: 1010px; top: 467px; }
  hotline-card { position: absolute; left: 50%; top: 802px; width: 320px; margin-left: -156px; }
  browser-window { position: absolute; left: 16px; top: 361px; width: 1021px; height: 477px; box-sizing: border-box; }
  .float { position: absolute; left: 61px; top: 957px; width: 62px; height: 62px; border-radius: 50%; background: #17344a; border: 1px solid #2a6b96; }
  ime-bar { position: absolute; right: 0; bottom: 0; box-sizing: border-box; }
`, `
  <div class="desk">
    <div class="icons">
      <div class="col">
        <desktop-icon icon="pc">此电脑</desktop-icon><desktop-icon icon="bin">回收站</desktop-icon><desktop-icon icon="edgelink">Microsoft<br>Edge</desktop-icon><desktop-icon icon="music"></desktop-icon>
        <desktop-icon icon="sliver">TeamViewer</desktop-icon><desktop-icon icon="sliver">希沃白板 5</desktop-icon><desktop-icon icon="sliver">希沃管家</desktop-icon><desktop-icon icon="sliver">希沃视频展台</desktop-icon>
        <desktop-icon icon="link">希沃授课助手</desktop-icon><desktop-icon icon="folders">各科课件</desktop-icon>
      </div>
      <div class="col">
        <desktop-icon icon="folderwarn">文件,通知</desktop-icon><desktop-icon icon="edge">8.html</desktop-icon><desktop-icon icon="slide">09.12 昼夜长<br>短的变化.p...</desktop-icon><desktop-icon icon="docs"></desktop-icon>
      </div>
    </div>
    <brand-logo></brand-logo>
    <hotline-card></hotline-card>
    <lesson-bar></lesson-bar>
    <browser-window><servu-page></servu-page></browser-window>
    <button class="float" aria-label="希沃白板"><ui-icon name="encardgrey" size="32"></ui-icon></button>
    <ime-bar></ime-bar>
  </div>
  <task-bar></task-bar>
`);
</script>
</body>
</html>
